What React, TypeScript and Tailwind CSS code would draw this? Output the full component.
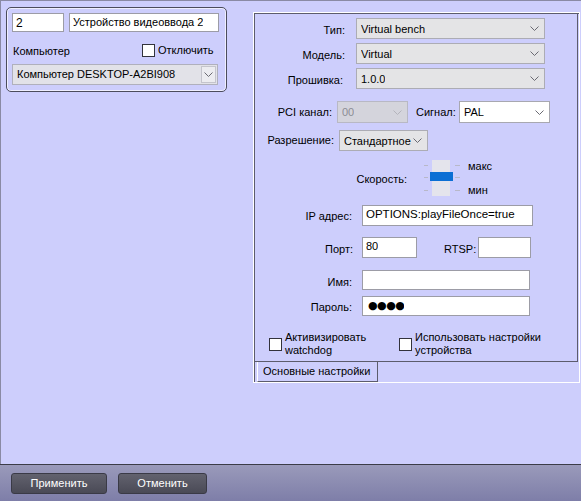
import React from "react"

function Chevron({ light }: { light?: boolean }) {
  return (
    <svg width="9" height="5" viewBox="0 0 9 5" className="shrink-0">
      <polyline points="0.5,0.5 4.5,4.5 8.5,0.5" fill="none" stroke={light ? "#b4b4bc" : "#6a6a72"} strokeWidth="1" />
    </svg>
  )
}

function Select({ value, className, disabled, white }: { value: string; className: string; disabled?: boolean; white?: boolean }) {
  return (
    <div
      className={
        "flex items-center justify-between pl-[4px] pr-[5px] border " +
        (white ? "bg-white border-[#a8a8b0] " : disabled ? "bg-[#d4d4dc] border-[#b8b8c4] text-[#8c8c94] " : "bg-[#e4e4e6] border-[#acacb4] ") +
        className
      }
    >
      <span className="truncate pt-[1px]">{value}</span>
      <Chevron light={disabled} />
    </div>
  )
}

function Input({ value, className }: { value?: string; className: string }) {
  return (
    <div className={"flex items-center bg-white border border-[#9c9ca6] px-[3px] " + className}>
      <span className="truncate">{value}</span>
    </div>
  )
}

function Check() {
  return <div className="w-[13px] h-[13px] bg-white border border-[#33333c] shrink-0"></div>
}

export default function App() {
  return (
    <div className="w-[581px] h-[501px] flex flex-col overflow-hidden font-['Liberation_Sans',Arial,sans-serif] text-[11px] text-black whitespace-nowrap">
      {/* рабочая область */}
      <div className="h-[464px] flex flex-row items-start bg-[#cdcefc] border-t border-l border-[#8a8aa4]">
        {/* левая панель */}
        <div className="ml-[5px] mt-[6px] w-[221px] h-[85px] rounded-[5px] border border-[#4c4c5c] shadow-[inset_0_0_0_1px_#eeeeff] flex flex-col">
          <div className="flex flex-row mt-[5px]">
            <Input value="2" className="ml-[5px] w-[52px] h-[19px] text-[12px]" />
            <Input value="Устройство видеоввода 2" className="ml-[5px] w-[150px] h-[19px]" />
          </div>
          <div className="flex flex-row items-center mt-[12px] h-[13px]">
            <span className="ml-[6px] w-[129px] pt-[1px]">Компьютер</span>
            <Check />
            <span className="ml-[3px]">Отключить</span>
          </div>
          <div className="ml-[5px] mt-[7px] w-[206px] h-[21px] flex items-center bg-[#e2e2e8] border border-[#b0b0bc] pl-[4px]">
            <span className="flex-1 truncate">Компьютер DESKTOP-A2BI908</span>
            <div className="w-[15px] h-[17px] mr-[1px] flex items-center justify-center border border-[#c4c4cc] bg-[#ececf0]">
              <Chevron />
            </div>
          </div>
        </div>

        {/* правая панель с вкладкой */}
        <div className="ml-[26px] mt-[11px] w-[327px] h-[371px] border border-white flex flex-col">
          <div className="flex-1 flex flex-col border-l border-t border-[#5c5c6c]">
            <div className="w-[323px] h-[348px] border-r border-b border-[#5c5c6c] flex flex-col pl-[1px] pt-[1px]">
              <div className="flex flex-row items-center mt-[3px] h-[21px]">
                <span className="w-[89px] text-right pt-[3px]">Тип:</span>
                <Select value="Virtual bench" className="ml-[11px] w-[189px] h-[21px]" />
              </div>
              <div className="flex flex-row items-center mt-[4px] h-[21px]">
                <span className="w-[89px] text-right pt-[3px]">Модель:</span>
                <Select value="Virtual" className="ml-[11px] w-[189px] h-[21px]" />
              </div>
              <div className="flex flex-row items-center mt-[4px] h-[21px]">
                <span className="w-[87px] text-right pt-[3px]">Прошивка:</span>
                <Select value="1.0.0" className="ml-[13px] w-[189px] h-[21px]" />
              </div>
              <div className="flex flex-row items-center mt-[12px] h-[22px]">
                <span className="w-[76px] text-right">PCI канал:</span>
                <Select value="00" disabled className="ml-[5px] w-[71px] h-[22px]" />
                <span className="ml-[8px] w-[43px]">Сигнал:</span>
                <Select value="PAL" white className="w-[91px] h-[22px]" />
              </div>
              <div className="flex flex-row items-center mt-[7px] h-[21px]">
                <span className="w-[78px] text-right">Разрешение:</span>
                <Select value="Стандартное" className="ml-[5px] w-[89px] h-[21px] pl-[3px] pr-[4px]" />
              </div>
              <div className="flex flex-row items-center mt-[9px] h-[36px]">
                <span className="w-[151px] text-right pt-[2px]">Скорость:</span>
                <div className="ml-[17px] relative w-[37px] h-[36px]">
                  <div className="absolute left-[8px] top-0 w-[18px] h-[36px] bg-[#e4e4ec]"></div>
                  <div className="absolute left-0 top-[5px] w-[4px] h-[1px] bg-[#b8b8c8]"></div>
                  <div className="absolute left-0 top-[17px] w-[4px] h-[1px] bg-[#b8b8c8]"></div>
                  <div className="absolute left-0 top-[30px] w-[4px] h-[1px] bg-[#b8b8c8]"></div>
                  <div className="absolute left-[31px] top-[5px] w-[5px] h-[1px] bg-[#b8b8c8]"></div>
                  <div className="absolute left-[31px] top-[17px] w-[5px] h-[1px] bg-[#b8b8c8]"></div>
                  <div className="absolute left-[31px] top-[30px] w-[5px] h-[1px] bg-[#b8b8c8]"></div>
                  <div className="absolute left-[6px] top-[12px] w-[23px] h-[9px] bg-[#0b6fd4]"></div>
                </div>
                <div className="ml-[7px] flex flex-col justify-between h-[36px] leading-[12px]">
                  <span>макс</span>
                  <span>мин</span>
                </div>
              </div>
              <div className="flex flex-row items-center mt-[9px] h-[20px]">
                <span className="w-[96px] text-right pt-[3px]">IP адрес:</span>
                <Input value="OPTIONS:playFileOnce=true" className="ml-[10px] w-[171px] h-[21px] text-[11.5px]" />
              </div>
              <div className="flex flex-row items-center mt-[12px] h-[20px]">
                <span className="w-[97px] text-right pt-[4px]">Порт:</span>
                <Input value="80" className="ml-[9px] w-[55px] h-[21px] items-start" />
                <span className="ml-[27px] w-[34px] pt-[4px]">RTSP:</span>
                <Input className="w-[53px] h-[21px]" />
              </div>
              <div className="flex flex-row items-center mt-[13px] h-[20px]">
                <span className="w-[96px] text-right pt-[4px]">Имя:</span>
                <Input className="ml-[10px] w-[168px] h-[20px]" />
              </div>
              <div className="flex flex-row items-center mt-[6px] h-[20px]">
                <span className="w-[96px] text-right pt-[3px]">Пароль:</span>
                <Input value="●●●●" className="ml-[10px] w-[168px] h-[20px] pl-[5px] text-[11px] tracking-[-0.5px] font-['DejaVu_Sans',sans-serif]" />
              </div>
              <div className="flex flex-row items-center mt-[15px] h-[26px]">
                <div className="ml-[13px] w-[130px] flex flex-row items-center">
                  <Check />
                  <span className="ml-[3px] leading-[13px]">Активизировать<br />watchdog</span>
                </div>
                <div className="flex flex-row items-center">
                  <Check />
                  <span className="ml-[3px] leading-[13px]">Использовать настройки<br />устройства</span>
                </div>
              </div>
            </div>
            <div className="flex flex-row">
              <div className="ml-[2px] w-[121px] h-[20px] border-l border-l-white border-r border-b border-[#5c5c6c] flex items-center pl-[5px]">
                Основные настройки
              </div>
            </div>
          </div>
        </div>
      </div>

      {/* нижняя панель */}
      <div className="h-[37px] border-t border-[#3c3c48] bg-gradient-to-b from-[#9a9aba] to-[#7e7ea8] flex flex-row items-start pt-[8px]">
        <button className="ml-[11px] w-[96px] h-[21px] rounded-[3px] border border-[#3a3a46] bg-gradient-to-b from-[#62626e] to-[#4a4a56] text-white text-[11px]">
          Применить
        </button>
        <button className="ml-[11px] w-[89px] h-[21px] rounded-[3px] border border-[#3a3a46] bg-gradient-to-b from-[#62626e] to-[#4a4a56] text-white text-[11px]">
          Отменить
        </button>
      </div>
    </div>
  )
}
